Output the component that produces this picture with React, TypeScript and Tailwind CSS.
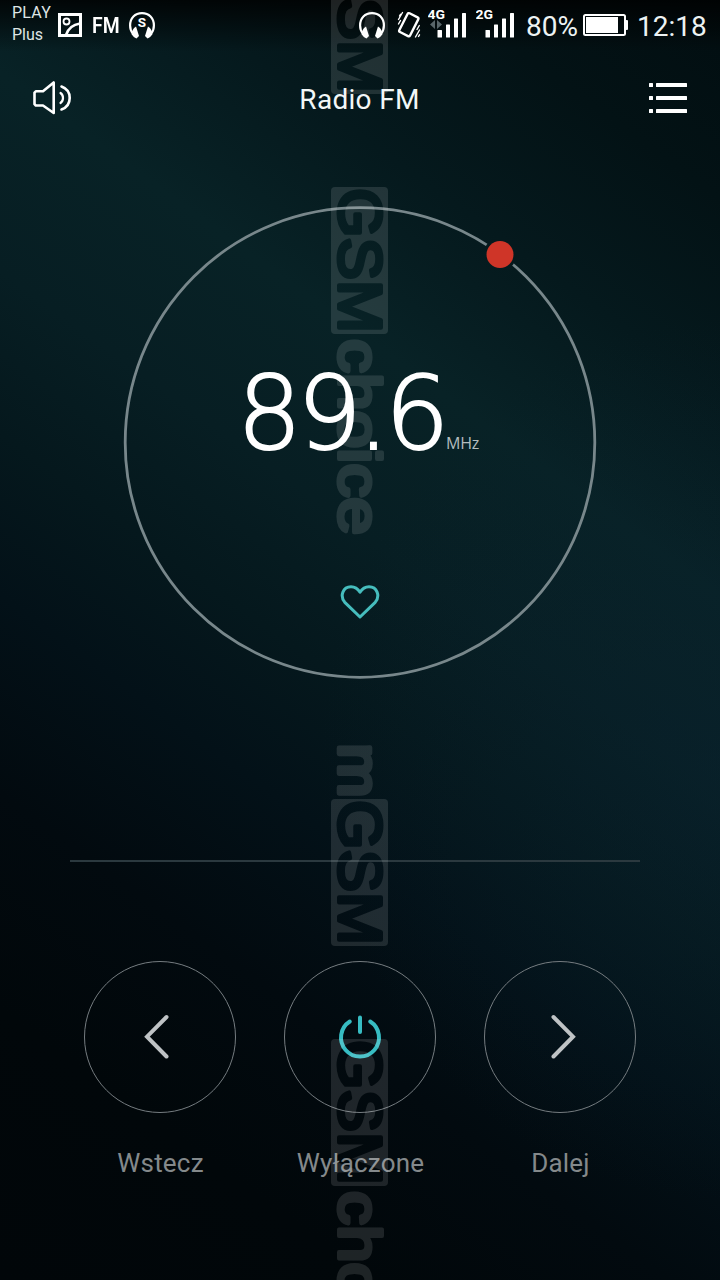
import React from "react";

const ROBOTO = "font-['Roboto',sans-serif]";

function PictureIcon() {
  return (
    <svg width="24" height="24" viewBox="0 0 24 24" fill="none" stroke="#fff">
      <rect x="1.5" y="1.5" width="21" height="21" strokeWidth="3" />
      <circle cx="8.5" cy="8.5" r="3" strokeWidth="1.8" />
      <path d="M8 22C10 16 15 11.500 22 10.500" strokeWidth="2.6" />
    </svg>
  );
}

function Headphones({ letter }: { letter?: string }) {
  return (
    <svg width="28" height="28" viewBox="0 0 28 28" fill="none">
      <path
        d="M4.800 22.500C2.700 20 2.100 17.500 2.100 14.500C2.100 7 7 2.200 14 2.200S25.900 7 25.900 14.500C25.900 17.500 25.300 20 23.200 22.500"
        stroke="#fff"
        strokeWidth="2.200"
      />
      <path d="M8 15.500C5 17 3.600 20.500 3.800 23.500C5 25.500 6.500 26.500 8.500 27.500L11 25Z" fill="#fff" />
      <path d="M20 15.500C23 17 24.400 20.500 24.200 23.500C23 25.500 21.500 26.500 19.500 27.500L17 25Z" fill="#fff" />
      {letter && (
        <text
          x="14"
          y="15.500"
          textAnchor="middle"
          fill="#fff"
          className="font-['Roboto',sans-serif] text-[13.500px] font-bold"
        >
          {letter}
        </text>
      )}
    </svg>
  );
}

function VibrateIcon() {
  return (
    <svg width="24" height="28" viewBox="0 0 24 28" fill="none" stroke="#fff" strokeLinecap="round">
      <rect x="5.800" y="3.200" width="12" height="21" rx="1.500" strokeWidth="2.400" transform="rotate(27 11.800 13.700)" />
      <path d="M1.500 8.500L5.500 1.500M1.500 13L3.500 9.500M18.500 26L22.500 19M20 18.500L22.300 14.500M2.500 5L3.500 3.300M21.500 25.500L22.500 23.800" strokeWidth="1.400" />
    </svg>
  );
}

function Signal({ label, arrows }: { label: string; arrows?: boolean }) {
  return (
    <svg width="40" height="32" viewBox="0 0 40 32" fill="#fff">
      <text
        x="-0.500"
        y="11"
        textLength="17.500"
        lengthAdjust="spacingAndGlyphs"
        className="font-['Roboto',sans-serif] text-[13px] font-bold tracking-normal"
      >
        {label}
      </text>
      {arrows && <path d="M7 12V21L2 16.500ZM9 12V21L14 16.500Z" fill="#59666a" />}
      <rect x="9.500" y="22" width="4.500" height="7.500" rx="0.500" />
      <rect x="18" y="16.500" width="4" height="13" rx="0.500" />
      <rect x="26" y="10.500" width="4" height="19" rx="0.500" />
      <rect x="34" y="5" width="4" height="24.500" rx="0.500" />
    </svg>
  );
}

function BatteryIcon() {
  return (
    <svg width="45" height="22" viewBox="0 0 45 22" fill="none">
      <rect x="1" y="1" width="41" height="20" rx="1.500" stroke="#fff" strokeWidth="2" />
      <rect x="3" y="3" width="32" height="16" fill="#fff" />
      <rect x="42.500" y="6" width="2.500" height="10" rx="1" fill="#fff" />
    </svg>
  );
}

function SpeakerIcon() {
  return (
    <svg width="40" height="36" viewBox="0 0 40 36" fill="none" stroke="#fff" strokeWidth="2.600" strokeLinejoin="round" strokeLinecap="round">
      <path d="M3.800 11.300H11L21.700 2.500V33L11 25.500H3.800L2.500 24.200V12.600Z" />
      <path d="M29.500 6.500C35 8.500 37.700 13 37.700 18S35 27.500 29.500 29.500" />
      <path d="M28.500 13C30.300 14.200 31 15.800 31 18S30.300 21.800 28.500 23" strokeWidth="2.200" />
    </svg>
  );
}

function MenuIcon() {
  return (
    <svg width="40" height="32" viewBox="0 0 40 32" fill="#fff">
      {[1, 14, 27].map((y) => (
        <g key={y}>
          <rect x="1" y={y} width="4" height="4" rx="0.500" />
          <rect x="8" y={y} width="31" height="4" rx="0.500" />
        </g>
      ))}
    </svg>
  );
}

function StatusBar() {
  return (
    <div className="flex h-[50px] justify-between">
      <div className="flex pl-3">
        <div className="w-[46px] pt-[2px] text-[16px] leading-[22px] text-[#dfe5e5]">
          <div className="tracking-[0.200px]">PLAY</div>
          <div>Plus</div>
        </div>
        <div className="pt-[13px]">
          <PictureIcon />
        </div>
        <div className="ml-[10px] w-[36px] pt-[11px] text-[22px] leading-[30px] font-semibold text-white">
          <span className="inline-block origin-left scale-x-[0.88]">FM</span>
        </div>
        <div className="pt-[11px]">
          <Headphones letter="S" />
        </div>
      </div>
      <div className="flex pr-3">
        <div className="-ml-px w-[39px] pt-[11px]">
          <Headphones />
        </div>
        <div className="w-[31px] pt-[11px]">
          <VibrateIcon />
        </div>
        <div className="w-12 pt-2">
          <Signal label="4G" arrows />
        </div>
        <div className="w-[50px] pt-2">
          <Signal label="2G" />
        </div>
        <div className="w-[57px] pt-[10px] text-[28px] leading-[34px] whitespace-nowrap text-[#edf3f3]">80%</div>
        <div className="w-[54px] pt-[14px]">
          <BatteryIcon />
        </div>
        <div className="w-[71px] pt-[10px] text-[28px] leading-[34px] text-[#edf3f3]">12:18</div>
      </div>
    </div>
  );
}

function TitleBar() {
  return (
    <header className="flex h-24 items-center justify-between px-8">
      <button aria-label="Głośnik">
        <SpeakerIcon />
      </button>
      <h1 className="pt-[3px] pr-[1px] text-[28px] leading-8 tracking-[0.300px] text-[#f2f7f7]">Radio FM</h1>
      <button aria-label="Lista">
        <MenuIcon />
      </button>
    </header>
  );
}

function Dial() {
  return (
    <section className="relative mx-auto mt-[60px] h-[474px] w-[474px]">
      <svg className="absolute inset-0" width="474" height="474" viewBox="0 0 474 474" fill="none">
        <defs>
          <mask id="dial-gap">
            <rect width="474" height="474" fill="#fff" />
            <circle cx="377" cy="48.500" r="16.500" fill="#000" />
          </mask>
        </defs>
        <circle cx="237" cy="236.500" r="234.800" stroke="#78878b" strokeWidth="2.800" mask="url(#dial-gap)" />
        <circle cx="377" cy="48.500" r="13.500" fill="#cf3528" />
      </svg>
      <div className="relative flex items-baseline pt-[143px] pl-[114px]">
        <span className="w-[209px] font-['DejaVu_Sans',sans-serif] text-[102px] leading-[130px] font-extralight tracking-[-4.800px] text-white [-webkit-text-stroke:1.800px_#fff]">
          89.6
        </span>
        <span className="font-['Open_Sans',sans-serif] text-[16px] leading-5 tracking-[-0.200px] text-[#b3bcbe]">MHz</span>
      </div>
      <div className="relative mt-[105px] flex justify-center">
        <svg width="40" height="36" viewBox="0 0 40 36" fill="none" stroke="#46bdbd" strokeWidth="3" strokeLinejoin="round">
          <path d="M20 33L4.800 18.300C-0.500 12 3 2.700 11 2.700C15 2.700 18 5 20 8.200C22 5 25 2.700 29 2.700C37 2.700 40.500 12 35.200 18.300Z" />
        </svg>
      </div>
    </section>
  );
}

function Control({ label, children }: { label: string; children: React.ReactNode }) {
  return (
    <div className="flex w-[200px] flex-col items-center">
      <button className="flex h-[152px] w-[152px] items-center justify-center rounded-full border border-[#757c80]">
        {children}
      </button>
      <span className="mt-[34px] pl-px text-[26px] leading-8 tracking-[0.200px] text-[#84898b]">{label}</span>
    </div>
  );
}

const MARKS = [
  { y: -53, prefix: false, suffix: false },
  { y: 187, prefix: false, suffix: true },
  { y: 799, prefix: true, suffix: false },
  { y: 1039, prefix: false, suffix: true },
];

function Watermark() {
  const font = "font-['Liberation_Sans',Arial,sans-serif]";
  return (
    <svg className="pointer-events-none absolute inset-0" width="720" height="1280" viewBox="0 0 720 1280">
      <defs>
        <mask id="mark-letters" maskUnits="userSpaceOnUse" x="0" y="-58" width="148" height="58">
          <rect x="0" y="-58" width="148" height="58" fill="#fff" />
          <text x="1" y="-7.500" textLength="145" lengthAdjust="spacingAndGlyphs" fill="#000" stroke="#000" strokeWidth="4" strokeLinejoin="round" className={`${font} text-[62px]`}>
            GSM
          </text>
        </mask>
      </defs>
      {MARKS.map((m) => (
        <g key={m.y} transform={`translate(331 ${m.y}) rotate(90)`} fill="#fff" opacity="0.115">
          <rect x="0" y="-57" width="147" height="57" rx="4" mask="url(#mark-letters)" />
          {m.prefix && (
            <text x="-55.500" y="-7.500" textLength="54" lengthAdjust="spacingAndGlyphs" stroke="#fff" strokeWidth="4.500" strokeLinejoin="round" className={`${font} text-[59px]`}>
              m
            </text>
          )}
          {m.suffix && (
            <text x="152" y="-7.500" textLength="196" lengthAdjust="spacingAndGlyphs" stroke="#fff" strokeWidth="4" strokeLinejoin="round" className={`${font} text-[59px]`}>
              choice
            </text>
          )}
        </g>
      ))}
    </svg>
  );
}

export default function App() {
  return (
    <div
      className={`${ROBOTO} relative h-[1280px] w-[720px] overflow-hidden bg-[linear-gradient(180deg,rgba(0,0,0,0.8)_0px,rgba(0,0,0,0)_52px),radial-gradient(ellipse_400px_440px_at_720px_760px,rgba(10,34,48,0.45),rgba(10,34,48,0)),linear-gradient(216deg,#020e11_0%,#031215_11%,#05191d_22%,#082226_33%,#071e23_44%,#05181d_53%,#031118_62%,#020a0f_73%,#01070a_85%,#010609_100%)]`}
    >
      <StatusBar />
      <TitleBar />
      <main>
        <Dial />
        <div className="mt-[180px] mr-20 ml-[70px] h-[2px] bg-[#2b393f]" />
        <div className="mt-[99px] flex justify-center">
          <Control label="Wstecz">
            <svg width="40" height="48" viewBox="0 0 40 48" fill="none" stroke="#bfc3c5" strokeWidth="4" strokeLinecap="round">
              <path d="M26.500 4L7 23.700L26.500 43.500" />
            </svg>
          </Control>
          <Control label="Wyłączone">
            <svg width="48" height="48" viewBox="0 0 48 48" fill="none" stroke="#37bcc2" strokeWidth="4" strokeLinecap="round">
              <path d="M13.800 8.500A19 19 0 1 0 34.200 8.500" />
              <path d="M24 4.500V19" />
            </svg>
          </Control>
          <Control label="Dalej">
            <svg width="40" height="48" viewBox="0 0 40 48" fill="none" stroke="#bfc3c5" strokeWidth="4" strokeLinecap="round">
              <path d="M13.500 4L33 23.700L13.500 43.500" />
            </svg>
          </Control>
        </div>
      </main>
      <Watermark />
    </div>
  );
}
